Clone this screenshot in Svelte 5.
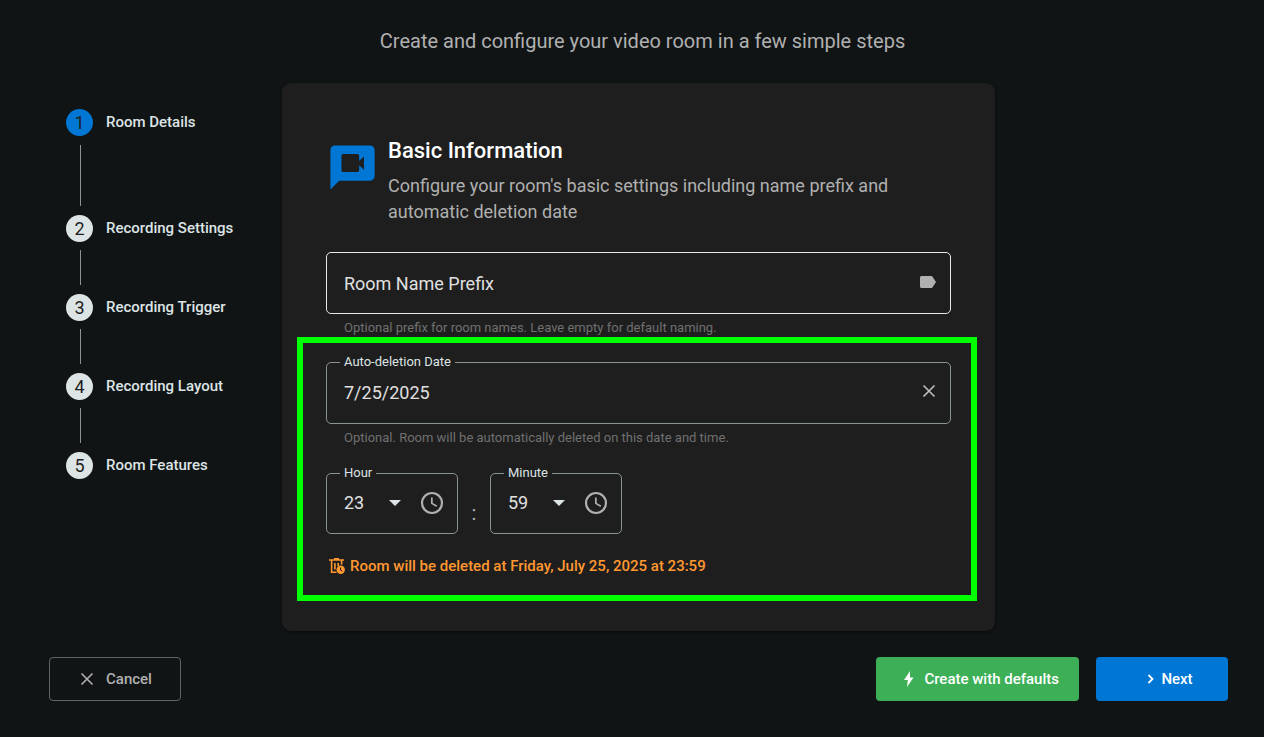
<script>
  const steps = ['Room Details', 'Recording Settings', 'Recording Trigger', 'Recording Layout', 'Room Features'];
  const pad = (n) => String(n).padStart(2, '0');
  const hours = Array.from({ length: 24 }, (_, i) => pad(i));
  const minutes = Array.from({ length: 60 }, (_, i) => pad(i));

  let current = $state(0);
  let prefix = $state('');
  let date = $state('7/25/2025');
  let hour = $state('23');
  let minute = $state('59');

  const longDate = $derived.by(() => {
    const d = new Date(date);
    return isNaN(d.getTime())
      ? ''
      : d.toLocaleDateString('en-US', { weekday: 'long', year: 'numeric', month: 'long', day: 'numeric' });
  });
</script>

{#snippet clock()}
  <svg class="clock" viewBox="0 0 24 24" aria-hidden="true">
    <circle cx="12" cy="12" r="10" fill="none" stroke="currentColor" stroke-width="2.200" />
    <path d="M11 6.500h1.700v5.400l4.500 2.700-.8 1.400L11 12.800z" fill="currentColor" />
  </svg>
{/snippet}

{#snippet caret()}
  <svg class="caret" viewBox="0 0 12 6" aria-hidden="true"><path d="M0 0h12L6 6z" fill="currentColor" /></svg>
{/snippet}

{#snippet cross()}
  <svg class="cross" viewBox="0 0 14 14" aria-hidden="true">
    <path d="M1.500 1.500l11 11M12.500 1.500l-11 11" fill="none" stroke="currentColor" stroke-width="1.600" />
  </svg>
{/snippet}

<div class="page">
  <p class="subtitle">Create and configure your video room in a few simple steps</p>

  <main>
    <ol class="stepper">
      {#each steps as step, i}
        <li class:active={i === current}>
          <button type="button" onclick={() => (current = i)}>
            <span class="num">{i + 1}</span>
            <span>{step}</span>
          </button>
          {#if i < steps.length - 1}<span class="line"></span>{/if}
        </li>
      {/each}
    </ol>

    <section class="card">
      <header>
        <svg class="chat" viewBox="0 0 24 24" aria-hidden="true">
          <path
            fill="currentColor"
            fill-rule="evenodd"
            d="M20 2H4c-1.100 0-2 .9-2 2v18l4-4h14c1.100 0 2-.9 2-2V4c0-1.100-.9-2-2-2zM17.200 13l-2.200-2v2.200c0 .5-.4.800-.8.800H7.800c-.4 0-.8-.3-.8-.8V6.700c0-.4.400-.8.800-.8h6.400c.4 0 .8.400.8.800V9l2.200-2z"
          />
        </svg>
        <div>
          <h1>Basic Information</h1>
          <p>Configure your room's basic settings including name prefix and automatic deletion date</p>
        </div>
      </header>

      <div class="field bright">
        {#if !prefix}<label class="inside" for="prefix">Room Name Prefix</label>{/if}
        <input id="prefix" type="text" aria-label="Room Name Prefix" bind:value={prefix} />
        <svg class="tag" viewBox="0 0 16 12" aria-hidden="true">
          <path d="M1.500 0h9.700c.5 0 .9.200 1.200.6L16 6l-3.600 5.400c-.3.400-.7.600-1.200.6H1.500C.7 12 0 11.300 0 10.500v-9C0 .7.700 0 1.500 0z" fill="currentColor" />
        </svg>
      </div>
      <p class="hint">Optional prefix for room names. Leave empty for default naming.</p>

      <div class="deletion">
        <div class="field filled">
          <label class="notch" for="date">Auto-deletion Date</label>
          <input id="date" type="text" bind:value={date} />
          <button type="button" class="clear" aria-label="Clear date" onclick={() => (date = '')}>{@render cross()}</button>
        </div>
        <p class="hint">Optional. Room will be automatically deleted on this date and time.</p>

        <div class="time">
          <div class="field filled small">
            <label class="notch" for="hour">Hour</label>
            <select id="hour" bind:value={hour}>
              {#each hours as h}<option value={h}>{h}</option>{/each}
            </select>
            {@render caret()}
            {@render clock()}
          </div>
          <span class="colon">:</span>
          <div class="field filled small">
            <label class="notch" for="minute">Minute</label>
            <select id="minute" bind:value={minute}>
              {#each minutes as m}<option value={m}>{m}</option>{/each}
            </select>
            {@render caret()}
            {@render clock()}
          </div>
        </div>

        {#if longDate}
          <p class="notice">
            <svg viewBox="0 0 16 16" aria-hidden="true">
              <g fill="none" stroke="currentColor" stroke-width="1.600">
                <path d="M0 2h15M5 .8h5M2.600 2.500v11.700h4.900M12.600 2.500v4M5.900 5v6.500M9.200 5v3" />
              </g>
              <circle cx="11.700" cy="11.800" r="4.200" fill="currentColor" />
              <path d="M11.500 9.500v2.500l1.700 1" fill="none" stroke="#1e1e1e" stroke-width="1" />
            </svg>
            Room will be deleted at {longDate} at {hour}:{minute}
          </p>
        {/if}
        <span class="highlight"></span>
      </div>
    </section>
  </main>

  <footer>
    <button type="button" class="btn cancel">{@render cross()}Cancel</button>
    <div class="actions">
      <button type="button" class="btn create">
        <svg class="bolt" viewBox="0 0 10 16" aria-hidden="true"><path d="M6 0L0 9h3.800L3 16l6.500-9.500H6z" fill="currentColor" /></svg>
        Create with defaults
      </button>
      <button type="button" class="btn next" onclick={() => (current = Math.min(current + 1, steps.length - 1))}>
        <svg class="chevron" viewBox="0 0 8 10" aria-hidden="true"><path d="M1.500 1l4 4-4 4" fill="none" stroke="currentColor" stroke-width="1.800" /></svg>
        Next
      </button>
    </div>
  </footer>
</div>

<style>
  :global(body) {
    margin: 0;
    background: #101415;
  }
  .page {
    box-sizing: border-box;
    min-height: 100vh;
    padding: 27px 36px 36px 49px;
    font-family: Roboto, 'Liberation Sans', sans-serif;
    color: #dde4e5;
  }
  p,
  h1,
  ol {
    margin: 0;
    padding: 0;
  }
  button,
  input,
  select {
    font: inherit;
    color: inherit;
    background: none;
    border: 0;
    padding: 0;
    margin: 0;
    outline: 0;
  }
  button {
    cursor: pointer;
  }
  svg {
    display: block;
    flex: none;
  }
  .subtitle {
    padding-left: 8px;
    font-size: 20px;
    line-height: 28px;
    text-align: center;
    color: #b0b0b0;
  }
  main {
    display: grid;
    grid-template-columns: 233px minmax(0, 1fr) 233px;
    margin-top: 28px;
  }
  .stepper {
    list-style: none;
    padding: 26px 0 0 17px;
  }
  .stepper button {
    display: flex;
    align-items: center;
    gap: 13px;
    font-size: 15px;
    line-height: 27px;
    font-weight: 500;
  }
  .num {
    width: 27px;
    height: 27px;
    border-radius: 50%;
    background: #dde4e5;
    color: #1e1e1e;
    font-size: 18px;
    font-weight: 400;
    text-align: center;
  }
  .active .num {
    background: #0077d4;
  }
  .line {
    display: block;
    width: 1px;
    height: 35px;
    margin: 8px 0 9px 14px;
    background: #899294;
  }
  .active .line {
    height: 61px;
    margin-top: 9px;
  }
  .card {
    padding: 52px 44px;
    border-radius: 9px;
    background: #1e1e1e;
    box-shadow: 0 1px 3px rgba(0, 0, 0, 0.5);
  }
  header {
    display: flex;
    gap: 9px;
    margin-bottom: 27px;
  }
  .chat {
    width: 53px;
    height: 53px;
    margin-top: 6px;
    color: #0077d4;
  }
  h1 {
    font-size: 22px;
    line-height: 32px;
    font-weight: 500;
    color: #fff;
  }
  header p {
    margin-top: 6px;
    font-size: 18px;
    line-height: 26px;
    color: #b0b0b0;
  }
  .field {
    position: relative;
    box-sizing: border-box;
    display: flex;
    align-items: center;
    height: 62px;
    padding: 0 14px 0 17px;
    border: 1px solid #899294;
    border-radius: 5px;
    font-size: 18px;
    color: #e0e0e0;
  }
  .bright {
    border-color: #e8e8e8;
  }
  .filled {
    padding-bottom: 2px;
  }
  .field input,
  .field select {
    flex: 1;
    min-width: 0;
    height: 100%;
    appearance: none;
  }
  .field option {
    background: #1e1e1e;
  }
  .inside {
    position: absolute;
    left: 17px;
    pointer-events: none;
  }
  .notch {
    position: absolute;
    top: -10px;
    left: 13px;
    padding: 0 4px;
    font-size: 13px;
    line-height: 18px;
    background: #1e1e1e;
    color: #dde4e5;
  }
  .tag {
    width: 16px;
    height: 12px;
    margin-bottom: 2px;
    color: #b0b0b0;
  }
  .clear {
    margin-bottom: 2px;
    color: #c0c0c0;
  }
  .cross {
    width: 14px;
    height: 14px;
  }
  .hint {
    padding: 0 18px;
    font-size: 13px;
    line-height: 27px;
    color: #707070;
  }
  .deletion {
    position: relative;
    margin-top: 21px;
  }
  .time {
    display: flex;
    margin-top: 22px;
  }
  .small {
    width: 132px;
    height: 61px;
    padding-right: 13px;
  }
  .caret {
    width: 12px;
    height: 6px;
    margin-right: 19px;
    color: #dde4e5;
    pointer-events: none;
  }
  .clock {
    width: 24px;
    height: 24px;
    color: #b0b0b0;
  }
  .colon {
    width: 32px;
    padding-top: 20px;
    font-size: 20px;
    line-height: 40px;
    text-align: center;
    color: #b0b0b0;
  }
  .notice {
    display: flex;
    align-items: center;
    gap: 5px;
    margin: 19px 0 0 3px;
    font-size: 15px;
    line-height: 26px;
    font-weight: 500;
    color: #ff9830;
  }
  .notice svg {
    width: 16px;
    height: 16px;
  }
  .highlight {
    position: absolute;
    inset: -25px -26px -22px -29px;
    border: 6px solid #0f0;
    pointer-events: none;
  }
  footer {
    display: flex;
    justify-content: space-between;
    margin-top: 26px;
  }
  .actions {
    display: flex;
    gap: 17px;
  }
  .btn {
    box-sizing: border-box;
    display: flex;
    align-items: center;
    justify-content: center;
    min-width: 132px;
    height: 44px;
    border-radius: 4px;
    font-size: 15px;
    font-weight: 500;
    color: #fff;
  }
  .cancel {
    gap: 12px;
    padding-left: 2px;
    border: 1px solid #606465;
    color: #b0b0b0;
  }
  .create {
    gap: 10px;
    padding: 0 20px 0 28px;
    background: #3caf57;
  }
  .next {
    gap: 6px;
    padding-left: 16px;
    background: #0077d4;
  }
  .bolt {
    width: 10px;
    height: 16px;
  }
  .chevron {
    width: 8px;
    height: 10px;
  }
</style>
